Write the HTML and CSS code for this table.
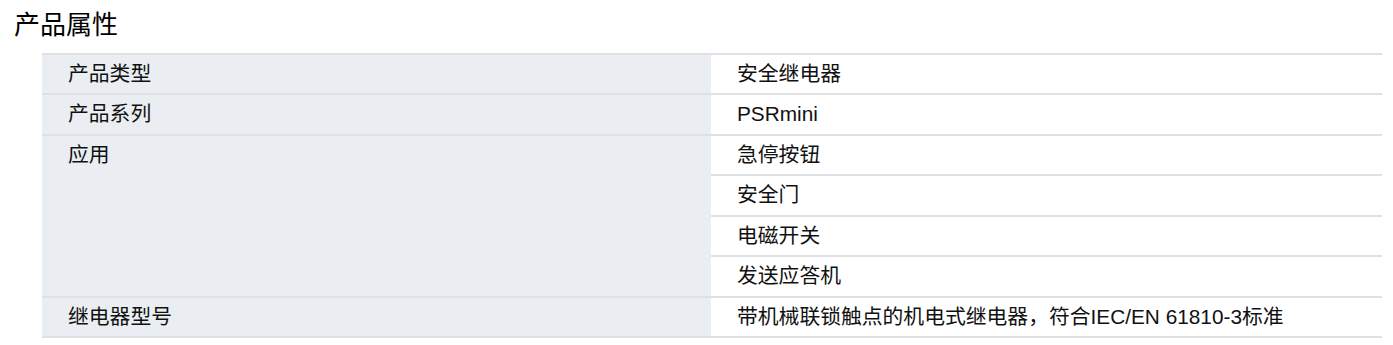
FILE: index.html
```html
<!DOCTYPE html>
<html lang="zh">
<head>
<meta charset="utf-8">
<link rel="stylesheet" href="styles.css">
</head>
<body>
<h2 class="title">产品属性</h2>
<table class="props">
  <colgroup><col class="col-key"><col class="col-val"></colgroup>
  <tr><th class="key">产品类型</th><td class="val">安全继电器</td></tr>
  <tr><th class="key">产品系列</th><td class="val">PSRmini</td></tr>
  <tr><th class="key" rowspan="4">应用</th><td class="val">急停按钮</td></tr>
  <tr><td class="val">安全门</td></tr>
  <tr><td class="val">电磁开关</td></tr>
  <tr><td class="val">发送应答机</td></tr>
  <tr><th class="key">继电器型号</th><td class="val">带机械联锁触点的机电式继电器，符合IEC/EN 61810-3标准</td></tr>
</table>
</body>
</html>
```
FILE: styles.css
```css
html, body {
  margin: 0;
  padding: 0;
  background: #ffffff;
}
body {
  font-family: "Liberation Sans", "Noto Sans CJK SC", sans-serif;
  color: #111;
}
.title {
  margin: 0 0 12.5px 0;
  padding: 10px 0 0 14px;
  font-size: 26px;
  line-height: 30px;
  font-weight: normal;
  color: #000;
}
.props {
  margin-left: 42px;
  width: 1340px;
  border-collapse: collapse;
  table-layout: fixed;
  font-size: 20.8px;
  line-height: 24px;
}
.col-key {
  width: 669px;
}
.props th, .props td {
  border-top: 2px solid #dfe2e5;
  border-bottom: 2px solid #dfe2e5;
  padding: 7.25px 10px 7.25px 26px;
  text-align: left;
  vertical-align: top;
  font-weight: normal;
}
.key {
  background: #eaeef2;
}
.val {
  background: #ffffff;
  padding-left: 27px;
}
```
